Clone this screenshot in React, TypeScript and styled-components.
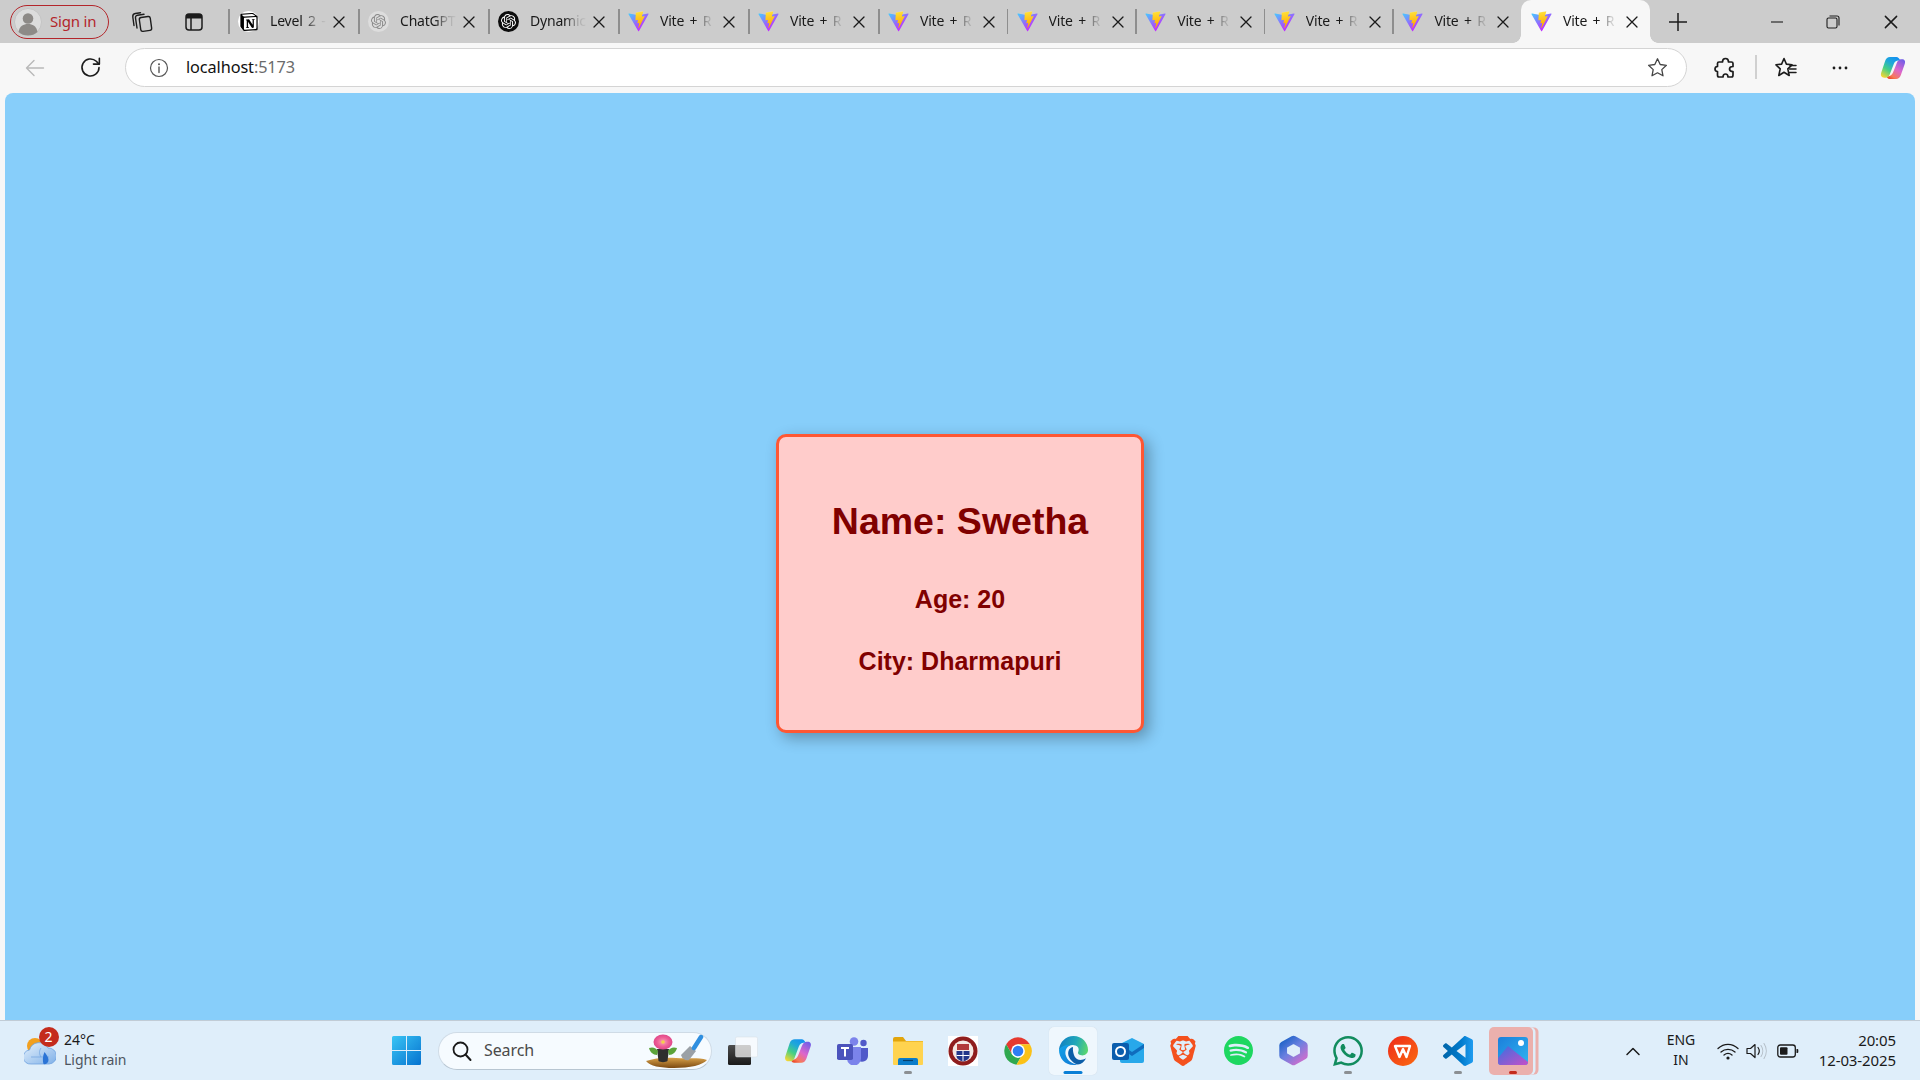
import React from "react";
import styled, { createGlobalStyle } from "styled-components";
import { SiNotion, SiOpenai, SiBrave, SiSpotify, SiWhatsapp } from "react-icons/si";

const UI = `"Noto Sans", "Open Sans", "Liberation Sans", sans-serif`;

const Global = createGlobalStyle`
  html, body { margin: 0; padding: 0; background: #f7f7f7; }
  * { box-sizing: border-box; }
  svg { display: block; }
`;

const Screen = styled.div`
  width: 1920px;
  height: 1080px;
  display: flex;
  flex-direction: column;
  overflow: hidden;
  font-family: ${UI};
  background: #f7f7f7;
`;

/* ---------- tab strip ---------- */
const TabStrip = styled.div`
  height: 43px;
  flex: none;
  display: flex;
  align-items: center;
  padding-left: 10px;
  background: #cccccc;
`;
const SignIn = styled.div`
  width: 99px;
  height: 34px;
  display: flex;
  align-items: center;
  gap: 8px;
  padding-left: 3px;
  border: 1.5px solid #b3262b;
  border-radius: 17px;
  color: #b3262b;
  font-size: 15px;
  letter-spacing: -0.2px;
`;
const SignInLabel = styled.span`
  margin-top: -2px;
`;
const Avatar = styled.span`
  width: 28px;
  height: 28px;
  flex: none;
`;
const Slot = styled.div<{ $w: number; $ml?: number }>`
  width: ${(p) => p.$w}px;
  height: 36px;
  flex: none;
  margin-left: ${(p) => p.$ml ?? 0}px;
  display: flex;
  align-items: center;
  justify-content: center;
`;
const Tabs = styled.div`
  display: flex;
  height: 43px;
  margin-left: 12px;
`;
const Tab = styled.div<{ $active?: boolean; $wide?: boolean }>`
  position: relative;
  width: ${(p) => (p.$wide ? 130 : 128.6)}px;
  height: 43px;
  flex: none;
  display: flex;
  align-items: center;
  padding-left: 10px;
  background: ${(p) => (p.$active ? "#f7f7f7" : "transparent")};
  border-radius: ${(p) => (p.$active ? "10px 10px 0 0" : "0")};
  &::before {
    content: "";
    display: ${(p) => (p.$active ? "none" : "block")};
    position: absolute;
    left: 0;
    top: 9px;
    width: 1.5px;
    height: 25px;
    background: #8e8e8e;
  }
  &::after {
    content: "";
    display: ${(p) => (p.$active ? "block" : "none")};
    position: absolute;
    bottom: 0;
    left: -8px;
    right: -8px;
    height: 8px;
    z-index: 0;
    background:
      radial-gradient(circle at 0 0, #cccccc 7.5px, #f7f7f7 8px) left bottom / 8px 8px no-repeat,
      radial-gradient(circle at 100% 0, #cccccc 7.5px, #f7f7f7 8px) right bottom / 8px 8px no-repeat;
  }
`;
const TabIcon = styled.span`
  width: 21px;
  height: 21px;
  flex: none;
  display: flex;
  align-items: center;
  justify-content: center;
`;
const RoundBadge = styled.span<{ $bg: string }>`
  width: 21px;
  height: 21px;
  border-radius: 50%;
  display: flex;
  align-items: center;
  justify-content: center;
  background: ${(p) => p.$bg};
`;
const TabLabel = styled.span`
  margin-left: 11px;
  flex: 0 0 58px;
  white-space: nowrap;
  font-size: 14px;
  letter-spacing: -0.2px;
  word-spacing: 2px;
  color: #1a1a1a;
  margin-top: -3px;
  -webkit-mask-image: linear-gradient(90deg, #000 60%, rgba(0, 0, 0, 0.22) 82%, transparent 100%);
  mask-image: linear-gradient(90deg, #000 60%, rgba(0, 0, 0, 0.22) 82%, transparent 100%);
`;
const TabClose = styled.span`
  margin-left: 3px;
  width: 16px;
  height: 16px;
  flex: none;
  color: #1a1a1a;
`;
const Spacer = styled.div`
  flex: 1;
`;

/* ---------- toolbar ---------- */
const Toolbar = styled.div`
  height: 50px;
  flex: none;
  display: flex;
  align-items: flex-start;
  padding-top: 5px;
  background: #f7f7f7;
`;
const AddressBar = styled.div`
  width: 1562px;
  height: 39px;
  flex: none;
  margin-left: 13px;
  display: flex;
  align-items: center;
  padding: 0 18px 0 23px;
  background: #fff;
  border: 1.5px solid #d4d4d4;
  border-radius: 20px;
`;
const Url = styled.span`
  margin-left: 17px;
  margin-top: -1px;
  font-size: 16.3px;
  letter-spacing: -0.1px;
  color: #111;
`;
const UrlPort = styled.span`
  color: #6b6b6b;
`;
const ToolSep = styled.div`
  width: 1.5px;
  height: 24px;
  flex: none;
  margin: 7px 0 0 8px;
  background: #d0d0d0;
`;
const ToolSlot = styled(Slot)`
  height: 39px;
`;

/* ---------- page ---------- */
const Page = styled.main`
  flex: 1;
  margin: 0 5px;
  display: flex;
  flex-direction: column;
  align-items: center;
  padding-top: 341px;
  background: #87cefa;
  border-radius: 8px 8px 0 0;
`;
const Card = styled.section`
  width: 368px;
  padding: 63px 0 54px;
  text-align: center;
  background: #ffcccb;
  border: 3px solid #ff5733;
  border-radius: 10px;
  box-shadow: 5px 5px 15px rgba(0, 0, 0, 0.3);
  font-family: "Liberation Sans", Arial, sans-serif;
  color: #800000;
`;
const Name = styled.h1`
  margin: 0;
  font-size: 37.5px;
  line-height: 43px;
  font-weight: 700;
`;
const Detail = styled.p<{ $mt: number }>`
  margin: ${(p) => p.$mt}px 0 0;
  font-size: 25px;
  line-height: 29px;
  font-weight: 700;
`;

/* ---------- taskbar ---------- */
const Taskbar = styled.footer`
  height: 60px;
  flex: none;
  display: flex;
  align-items: center;
  background: #dfeefa;
  border-top: 1px solid #c1ccd6;
`;
const Weather = styled.div`
  width: 392px;
  flex: none;
  display: flex;
  align-items: center;
  gap: 8px;
  padding-left: 24px;
`;
const WeatherIcon = styled.div`
  position: relative;
  width: 32px;
  height: 36px;
  flex: none;
`;
const Badge = styled.span`
  position: absolute;
  left: 14.5px;
  top: -5.5px;
  width: 20px;
  height: 20px;
  border-radius: 50%;
  background: #c42b1c;
  color: #fff;
  font-size: 14px;
  line-height: 20px;
  text-align: center;
`;
const TwoLines = styled.div`
  display: flex;
  flex-direction: column;
  margin-top: -2px;
  font-size: 14px;
  line-height: 20px;
`;
const LineDark = styled.span`
  color: #1a1a1a;
`;
const LineMuted = styled.span`
  color: #4d5560;
`;
const StartButton = styled.div`
  width: 29px;
  height: 29px;
  flex: none;
`;
const SearchBox = styled.div`
  width: 274px;
  height: 38px;
  flex: none;
  margin-left: 17px;
  display: flex;
  align-items: center;
  padding: 0 4px 0 12px;
  background: #f6fbff;
  border: 1px solid #cfdbe6;
  border-bottom-color: #b8c6d2;
  border-radius: 19px;
`;
const SearchText = styled.span`
  margin-left: 11px;
  margin-top: -1px;
  font-size: 16px;
  letter-spacing: -0.1px;
  color: #4a4a4a;
`;
const SearchArt = styled.span`
  margin-left: auto;
`;
const TaskIcons = styled.div`
  display: flex;
  margin-left: 3.5px;
`;
const TaskSlot = styled.div<{ $state?: "focus" | "alert" }>`
  position: relative;
  width: 55px;
  height: 48px;
  flex: none;
  display: flex;
  align-items: center;
  justify-content: center;
  &::before {
    content: "";
    display: ${(p) => (p.$state ? "block" : "none")};
    position: absolute;
    left: ${(p) => (p.$state === "alert" ? 3 : 3.5)}px;
    width: ${(p) => (p.$state === "alert" ? 44 : 48)}px;
    top: 0;
    bottom: 0;
    border-radius: 5px;
    background: ${(p) => (p.$state === "alert" ? "#ebb0ad" : "rgba(255,255,255,0.5)")};
    box-shadow: ${(p) => (p.$state === "alert" ? "3px 0 0 -0.5px #dfeefa, 6px 0 0 -0.5px #ebb0ad" : "0 0 1px rgba(0,0,0,0.15)")};
  }
  & > svg {
    position: relative;
  }
`;
const RunDot = styled.span<{ $kind: "run" | "focus" | "alert" }>`
  position: absolute;
  bottom: 1px;
  left: 50%;
  height: 3px;
  border-radius: 2px;
  transform: translateX(-50%);
  width: ${(p) => (p.$kind === "focus" ? 19 : 8)}px;
  background: ${(p) => (p.$kind === "run" ? "#8b8f93" : p.$kind === "focus" ? "#0a7fd6" : "#c42b1c")};
`;
const TrayLang = styled.div`
  width: 40px;
  flex: none;
  margin-left: 12px;
  margin-top: -1px;
  text-align: center;
  font-size: 14px;
  line-height: 20px;
  color: #1a1a1a;
`;
const Clock = styled.div`
  margin-left: auto;
  margin-right: 24px;
  margin-top: -2px;
  text-align: right;
  font-size: 15px;
  line-height: 20px;
  letter-spacing: -0.1px;
  color: #1a1a1a;
`;

/* ---------- drawings ---------- */
const Stroke = { fill: "none", stroke: "currentColor", strokeLinecap: "round", strokeLinejoin: "round" } as const;

const CloseX = ({ size = 16, c = "#1a1a1a" }: { size?: number; c?: string }) => (
  <svg width={size} height={size} viewBox="0 0 16 16">
    <path d="M3 3l10 10M13 3L3 13" stroke={c} strokeWidth="1.3" strokeLinecap="round" />
  </svg>
);

const ViteLogo = ({ id }: { id: string }) => (
  <svg width="21" height="21" viewBox="0 0 410 404">
    <defs>
      <linearGradient id={`va${id}`} x1="6" y1="33" x2="235" y2="344" gradientUnits="userSpaceOnUse">
        <stop stopColor="#41D1FF" />
        <stop offset="1" stopColor="#BD34FE" />
      </linearGradient>
      <linearGradient id={`vb${id}`} x1="194.65" y1="8.82" x2="236.08" y2="292.99" gradientUnits="userSpaceOnUse">
        <stop stopColor="#FFEA83" />
        <stop offset="0.083" stopColor="#FFDD35" />
        <stop offset="1" stopColor="#FFA800" />
      </linearGradient>
    </defs>
    <path d="M399.641 59.5246L215.643 388.545C211.844 395.338 202.084 395.378 198.228 388.618L10.5817 59.5563C6.38087 52.1896 12.6802 43.2665 21.0281 44.7586L205.223 77.6824C206.398 77.8924 207.601 77.8904 208.776 77.6763L389.119 44.8058C397.439 43.2894 403.768 52.1434 399.641 59.5246Z" fill={`url(#va${id})`} />
    <path d="M292.965 1.5744L156.801 28.2552C154.563 28.6937 152.906 30.5903 152.771 32.8664L144.395 174.33C144.198 177.662 147.258 180.248 150.51 179.498L188.42 170.749C191.967 169.931 195.172 173.055 194.443 176.622L183.18 231.775C182.422 235.487 185.907 238.661 189.532 237.56L212.947 230.446C216.577 229.344 220.065 232.527 219.297 236.242L201.398 322.875C200.278 328.294 207.486 331.249 210.492 326.603L212.5 323.5L323.454 102.072C325.312 98.3645 322.108 94.137 318.036 94.9228L279.014 102.454C275.347 103.161 272.227 99.746 273.262 96.1583L298.731 7.86689C299.767 4.27314 296.636 0.855181 292.965 1.5744Z" fill={`url(#vb${id})`} />
  </svg>
);

const AvatarIcon = () => (
  <svg width="28" height="28" viewBox="0 0 28 28">
    <circle cx="14" cy="14" r="13.5" fill="#dcdcdc" stroke="#c4c4c4" />
    <circle cx="14" cy="10.5" r="5.3" fill="#8d8a87" />
    <path d="M4.5 24c1-6 5-8 9.5-8s8.5 2 9.5 8c-2.5 2.5-6 3.5-9.5 3.5S7 26.5 4.5 24z" fill="#8d8a87" />
  </svg>
);

const CollectionsIcon = () => (
  <svg width="22" height="22" viewBox="0 0 22 22" color="#1c1c1c">
    <rect x="9" y="6" width="11" height="14" rx="2" transform="rotate(-8 14 13)" {...Stroke} strokeWidth="1.4" />
    <path d="M6 17L4.5 7C4.3 5.5 5 4.5 6.5 4.3L13 3.3" {...Stroke} strokeWidth="1.4" />
    <path d="M3 14.5L1.8 6C1.6 4 2.5 2.8 4.3 2.5L9.5 1.7" {...Stroke} strokeWidth="1.4" />
  </svg>
);

const VerticalTabsIcon = () => (
  <svg width="20" height="20" viewBox="0 0 20 20">
    <rect x="2" y="2" width="16" height="16" rx="3" fill="none" stroke="#1c1c1c" strokeWidth="1.5" />
    <path d="M2 5a3 3 0 0 1 3-3h10a3 3 0 0 1 3 3v1.5H2z" fill="#1c1c1c" />
    <path d="M7 6v12" stroke="#1c1c1c" strokeWidth="1.5" />
  </svg>
);

const Plus = () => (
  <svg width="20" height="20" viewBox="0 0 20 20">
    <path d="M10 1v18M1 10h18" stroke="#1c1c1c" strokeWidth="1.5" />
  </svg>
);

const MinIcon = () => (
  <svg width="14" height="14" viewBox="0 0 14 14">
    <path d="M1 7h12" stroke="#1c1c1c" strokeWidth="1.1" />
  </svg>
);
const RestoreIcon = () => (
  <svg width="14" height="14" viewBox="0 0 14 14">
    <rect x="1" y="3" width="10" height="10" rx="1.5" fill="none" stroke="#1c1c1c" strokeWidth="1.1" />
    <path d="M3.5 1h7.5a2 2 0 0 1 2 2v7.5" fill="none" stroke="#1c1c1c" strokeWidth="1.1" />
  </svg>
);

const BackArrow = () => (
  <svg width="20" height="20" viewBox="0 0 20 20" color="#b9b9b9">
    <path d="M18.5 10H1.5M9 2.5L1.5 10 9 17.5" {...Stroke} strokeWidth="1.4" />
  </svg>
);
const Reload = () => (
  <svg width="25" height="25" viewBox="0 0 22 22" color="#1c1c1c">
    <path d="M18.5 11a7.5 7.5 0 1 1-2.4-5.5L18.5 8" {...Stroke} strokeWidth="1.4" />
    <path d="M18.8 2.8V8h-5.2" {...Stroke} strokeWidth="1.4" />
  </svg>
);
const InfoIcon = () => (
  <svg width="20" height="20" viewBox="0 0 20 20" color="#555">
    <circle cx="10" cy="10" r="8.5" {...Stroke} strokeWidth="1.2" />
    <path d="M10 9v5.5" {...Stroke} strokeWidth="1.4" />
    <circle cx="10" cy="6.2" r="1" fill="#555" />
  </svg>
);
const StarIcon = () => (
  <svg width="21" height="21" viewBox="0 0 21 21" color="#444">
    <path d="M10.5 1.8l2.7 5.7 6.2.8-4.6 4.3 1.2 6.2-5.5-3-5.5 3 1.2-6.2-4.6-4.3 6.2-.8z" {...Stroke} strokeWidth="1.3" />
  </svg>
);
const PuzzleIcon = () => (
  <svg width="22" height="22" viewBox="0 0 22 22" color="#1c1c1c">
    <path d="M8.5 5C8.5 2.5 10 1.5 11.5 1.5C13 1.5 14.5 2.5 14.5 5H17.5C18.5 5 19 5.5 19 6.5V9.5C17 9.5 15.5 10.5 15.5 12C15.5 13.5 17 14.5 19 14.5V18C19 19 18.5 20 17.5 20H14C14 18 13 17 11.5 17C10 17 9 18 9 20H5C4 20 3.5 19 3.5 18V14.5C1.5 14.5 1 13.5 1 12C1 10.5 1.5 9.5 3.5 9.5V6.5C3.5 5.5 4 5 5 5Z" {...Stroke} strokeWidth="1.7" />
  </svg>
);
const FavoritesIcon = () => (
  <svg width="22" height="22" viewBox="0 0 22 22" color="#1c1c1c">
    <path d="M9 1.5l2.4 5.6 5.6.7-4.2 4 1.4 6.7L9 15.3 3.8 18.5l1.4-6.7-4.2-4 5.6-.7z" {...Stroke} strokeWidth="1.6" />
    <path d="M15 8.5H21M14.5 12H21M14.5 15.5H21" {...Stroke} strokeWidth="1.5" />
  </svg>
);
const DotsIcon = () => (
  <svg width="18" height="18" viewBox="0 0 18 18">
    <circle cx="3" cy="9" r="1.4" fill="#1c1c1c" />
    <circle cx="9" cy="9" r="1.4" fill="#1c1c1c" />
    <circle cx="15" cy="9" r="1.4" fill="#1c1c1c" />
  </svg>
);

const Copilot = ({ id, size }: { id: string; size: number }) => (
  <svg width={size} height={size} viewBox="0 0 32 32">
    <defs>
      <linearGradient id={`ca${id}`} x1="0.75" y1="0" x2="0.15" y2="1">
        <stop offset="0" stopColor="#1592f0" />
        <stop offset="0.3" stopColor="#1fa8d8" />
        <stop offset="0.62" stopColor="#45cf85" />
        <stop offset="1" stopColor="#f6d632" />
      </linearGradient>
      <linearGradient id={`cb${id}`} x1="0.85" y1="0" x2="0.2" y2="1">
        <stop offset="0" stopColor="#6f5ee8" />
        <stop offset="0.5" stopColor="#dd66cc" />
        <stop offset="0.85" stopColor="#f77a58" />
        <stop offset="1" stopColor="#ee4b2b" />
      </linearGradient>
    </defs>
    <path d="M19.5 28.5H12C10 28.5 9 27 8.5 25.5C12 25.5 15 24 16 21L20 11C21 8 23 6 25 6H26.5C29 6 30.5 8 29.5 11L25 24C24 27 22 28.5 19.5 28.5Z" fill={`url(#cb${id})`} />
    <path d="M12.5 3.5H20C22 3.5 23 5 24 7C21 7 18 8 17 11L13 21.5C12 25 10.5 27 8 27H6C3 27 1.5 24.5 2.5 21.5L7 8C8 5 10 3.5 12.5 3.5Z" fill={`url(#ca${id})`} />
  </svg>
);

const WeatherArt = () => (
  <svg width="32" height="36" viewBox="0 0 32 36">
    <defs>
      <linearGradient id="cloud" x1="0" y1="0" x2="1" y2="1">
        <stop offset="0" stopColor="#e6f2fc" />
        <stop offset="1" stopColor="#7fb0e8" />
      </linearGradient>
    </defs>
    <circle cx="11" cy="13" r="8" fill="#f2a01f" />
    <path d="M7 31a7 7 0 0 1-1.5-14 10 10 0 0 1 18.5-2 8 8 0 0 1 1 16z" fill="url(#cloud)" stroke="#6fa2e0" strokeWidth="0.8" />
    <path d="M7 24h18M17 15c-2 3-2 6 0 9" fill="none" stroke="#6fa2e0" strokeWidth="0.7" />
    <path d="M20.5 19c2 3 4 5 4 8a4 4 0 0 1-5 4c-1-3-1-8 1-12z" fill="#2b74d6" />
  </svg>
);

const WindowsLogo = () => (
  <svg width="29" height="29" viewBox="0 0 29 29">
    <defs>
      <linearGradient id="win" x1="0" y1="0" x2="1" y2="1">
        <stop offset="0" stopColor="#39c5f5" />
        <stop offset="1" stopColor="#0672cf" />
      </linearGradient>
    </defs>
    <path d="M0 1.5A1.5 1.5 0 0 1 1.5 0H14v14H0zM15 0h12.5A1.5 1.5 0 0 1 29 1.5V14H15zM0 15h14v14H1.5A1.5 1.5 0 0 1 0 27.5zM15 15h14v12.5a1.5 1.5 0 0 1-1.5 1.5H15z" fill="url(#win)" />
  </svg>
);

const SearchIcon = () => (
  <svg width="22" height="22" viewBox="0 0 22 22" color="#1a1a1a">
    <circle cx="9.5" cy="9.5" r="7" {...Stroke} strokeWidth="1.8" />
    <path d="M14.5 14.5L19.5 20" {...Stroke} strokeWidth="2" />
  </svg>
);

const FlowerPot = () => (
  <svg width="61" height="34" viewBox="0 0 61 34">
    <defs>
      <linearGradient id="soil" x1="0" y1="0" x2="0" y2="1">
        <stop offset="0" stopColor="#d9a24a" />
        <stop offset="1" stopColor="#7c4a12" />
      </linearGradient>
      <radialGradient id="petal">
        <stop offset="0" stopColor="#f9a4b8" />
        <stop offset="0.6" stopColor="#ee5f96" />
        <stop offset="1" stopColor="#e0478a" />
      </radialGradient>
    </defs>
    <path d="M0 27C8 24 20 23 30 24C42 25 52 23 61 26C57 31 44 34 28 34C14 34 4 32 0 27Z" fill="url(#soil)" />
    <path d="M11 15h12l-1.5 12c-2 1.5-7 1.5-9 0z" fill="#2e2e2e" />
    <path d="M3 14c4-1.5 7 0 9 3l-1 4c-4 0-7-3-8-7zM31 14c-4-1.5-7 0-9 3l1 4c4 0 7-3 8-7z" fill="#5ba33a" />
    <ellipse cx="17" cy="8" rx="9.5" ry="7.5" fill="url(#petal)" />
    <circle cx="17" cy="8" r="1.8" fill="#f4cf48" />
    <path d="M35 21L44 12L50 17L43 26C40 27 36 25 35 21Z" fill="#9aa0a6" />
    <path d="M48 14L55 3" stroke="#2f8fe0" strokeWidth="4.5" strokeLinecap="round" />
  </svg>
);

const TaskViewIcon = () => (
  <svg width="32" height="30" viewBox="0 0 32 30">
    <defs>
      <linearGradient id="tv" x1="0" y1="0" x2="0" y2="1">
        <stop offset="0" stopColor="#4d4d4d" />
        <stop offset="1" stopColor="#1a1a1a" />
      </linearGradient>
    </defs>
    <rect x="1" y="9" width="23" height="20" rx="1.5" fill="url(#tv)" />
    <rect x="8.5" y="1" width="22" height="20" rx="1.5" fill="#fff" fillOpacity="0.72" stroke="#d6dde3" strokeWidth="0.5" />
  </svg>
);

const TeamsIcon = () => (
  <svg width="32" height="28" viewBox="0 0 32 28">
    <circle cx="17" cy="4.5" r="4.3" fill="#7b83eb" />
    <circle cx="26.5" cy="6" r="3.2" fill="#5059c9" />
    <path d="M22 11h9v8a6 6 0 0 1-9 5z" fill="#5059c9" />
    <path d="M9 10h15v11a7 7 0 0 1-14 1z" fill="#7b83eb" />
    <rect x="0" y="7" width="16" height="16" rx="1.8" fill="#4b53bc" />
    <path d="M4 11h8M8 11v8.5" stroke="#fff" strokeWidth="2" />
  </svg>
);

const ExplorerIcon = () => (
  <svg width="30" height="28" viewBox="0 0 30 28">
    <path d="M0 2a2 2 0 0 1 2-2h8l3 4h17v6H0z" fill="#e2a50c" />
    <path d="M0 4.5h30V27a1 1 0 0 1-1 1H1a1 1 0 0 1-1-1z" fill="#ffd34f" />
    <path d="M5 23a2 2 0 0 1 2-2h16a2 2 0 0 1 2 2v5H5z" fill="#0a7cc9" />
    <path d="M10 23.5h10" stroke="#063f6a" strokeWidth="1.2" />
  </svg>
);

const EmblemIcon = () => (
  <svg width="30" height="30" viewBox="0 0 30 30">
    <rect width="30" height="30" fill="#fff" />
    <circle cx="15" cy="15" r="14.5" fill="#8f1d1d" />
    <circle cx="15" cy="15" r="10.5" fill="#f4e9e4" />
    <path d="M9 8h12v6H9z" fill="#b23a3a" />
    <path d="M8.5 15h13v5c0 3-3 4.5-6.5 5.5-3.5-1-6.5-2.5-6.5-5.5z" fill="#24378a" />
    <path d="M15 15v10M8.5 19.5h13" stroke="#fff" strokeWidth="1" />
  </svg>
);

const ChromeIcon = () => (
  <svg width="30" height="30" viewBox="0 0 48 48">
    <path d="M5 13A22 22 0 0 1 43 13L24 13 14.5 29.5z" fill="#e5392f" />
    <path d="M5 13A22 22 0 0 0 21.5 45.9L31 29.5H14.5z" fill="#2fa84f" />
    <path d="M43 13H24l7 16.5-9.5 16.4A22 22 0 0 0 43 13z" fill="#fbc116" />
    <circle cx="24" cy="24" r="11" fill="#fff" />
    <circle cx="24" cy="24" r="8.5" fill="#2f7df2" />
  </svg>
);

const EdgeIcon = () => (
  <svg width="31" height="31" viewBox="0 0 32 32">
    <defs>
      <linearGradient id="edgeTop" x1="0" y1="0.4" x2="1" y2="0.6">
        <stop offset="0" stopColor="#0f7fc4" />
        <stop offset="0.55" stopColor="#22a8b8" />
        <stop offset="1" stopColor="#5ad66f" />
      </linearGradient>
      <linearGradient id="edgeLeft" x1="0" y1="0" x2="0.6" y2="1">
        <stop offset="0" stopColor="#12a3e8" />
        <stop offset="1" stopColor="#1280d8" />
      </linearGradient>
    </defs>
    <path d="M1 15C2 7 8 1 16 1C25 1 31 8 31 15.5C31 19 28 21.5 24 21C21 20.5 20 19 21 17C22 14 21 11 16.5 10.5C11 10 7 12.5 1 15Z" fill="url(#edgeTop)" />
    <path d="M1 15C4 11 9 9.5 13 10.5C8 12.5 7 17 8 21C9.5 26 14 30 20 30.5C18.5 31 17 31 16 31C7 31 1 24 1 15Z" fill="url(#edgeLeft)" />
    <path d="M15.5 12.5C10.5 13.5 9.5 19 11.5 23C13.5 27 17.5 30 20.5 30.5C24 30 27 28 29 24C24 27 19 26 17 22C16 19.5 15 16 15.5 12.5Z" fill="#0c5ea8" />
  </svg>
);

const OutlookIcon = () => (
  <svg width="32" height="28" viewBox="0 0 32 28">
    <path d="M8 7l12-6 12 6v17a2 2 0 0 1-2 2H10a2 2 0 0 1-2-2z" fill="#28a8ea" />
    <path d="M8 7l12 8 12-8v4l-12 8-12-8z" fill="#0f6cbd" />
    <rect x="0" y="6" width="17" height="17" rx="2" fill="#0a5dad" />
    <circle cx="8.5" cy="14.5" r="4.5" fill="none" stroke="#fff" strokeWidth="2" />
  </svg>
);

const M365Icon = () => (
  <svg width="29" height="31" viewBox="0 0 28 30">
    <defs>
      <linearGradient id="m365" x1="0" y1="0" x2="0.8" y2="1">
        <stop offset="0" stopColor="#1f63c8" />
        <stop offset="0.5" stopColor="#6a80e0" />
        <stop offset="1" stopColor="#c070d0" />
      </linearGradient>
    </defs>
    <path d="M14 4.5l10 5.5v10l-10 5.5L4 20v-10z" fill="none" stroke="url(#m365)" strokeWidth="7.5" strokeLinejoin="round" />
  </svg>
);

const WpsIcon = () => (
  <svg width="30" height="30" viewBox="0 0 30 30">
    <defs>
      <linearGradient id="wps" x1="0" y1="0" x2="1" y2="1">
        <stop offset="0" stopColor="#ee2a1b" />
        <stop offset="1" stopColor="#fb6a10" />
      </linearGradient>
    </defs>
    <circle cx="15" cy="15" r="15" fill="url(#wps)" />
    <path d="M7 10h15l-3.5 11-3.5-8-3.5 8z" fill="none" stroke="#fff" strokeWidth="2.4" strokeLinejoin="round" />
  </svg>
);

const VsCodeIcon = () => (
  <svg width="30" height="30" viewBox="0 0 100 100">
    <defs>
      <linearGradient id="vsc" x1="0" y1="0" x2="1" y2="0">
        <stop offset="0" stopColor="#0065a9" />
        <stop offset="0.6" stopColor="#007acc" />
        <stop offset="1" stopColor="#1f9cf0" />
      </linearGradient>
    </defs>
    <path fillRule="evenodd" d="M70.9119 99.3171C72.4869 99.9307 74.2828 99.8914 75.8725 99.1264L96.4608 89.2197C98.6242 88.1787 100 85.9892 100 83.5872V16.4133C100 14.0113 98.6243 11.8218 96.4609 10.7808L75.8725 0.873756C73.7862 -0.130129 71.3446 0.11576 69.5135 1.44695C69.252 1.63711 69.0028 1.84943 68.769 2.08341L29.3551 38.0415L12.1872 25.0096C10.589 23.7965 8.35363 23.8959 6.86933 25.2461L1.36303 30.2549C-0.452552 31.9064 -0.454633 34.7627 1.35853 36.417L16.2471 50.0001L1.35853 63.5832C-0.454633 65.2374 -0.452552 68.0938 1.36303 69.7453L6.86933 74.7541C8.35363 76.1043 10.589 76.2037 12.1872 74.9905L29.3551 61.9587L68.769 97.9167C69.3925 98.5406 70.1246 99.0104 70.9119 99.3171ZM75.0152 27.2989L45.1091 50.0001L75.0152 72.7012V27.2989Z" fill="url(#vsc)" />
  </svg>
);

const PhotosIcon = () => (
  <svg width="30" height="30" viewBox="0 0 30 30">
    <defs>
      <linearGradient id="ph" x1="0" y1="0" x2="1" y2="1">
        <stop offset="0" stopColor="#1c7fdb" />
        <stop offset="1" stopColor="#2fb4f0" />
      </linearGradient>
      <linearGradient id="ph2" x1="0" y1="0" x2="1" y2="1">
        <stop offset="0" stopColor="#3a6fe0" />
        <stop offset="1" stopColor="#c64fc8" />
      </linearGradient>
    </defs>
    <rect width="30" height="28" y="1" rx="3" fill="url(#ph)" />
    <circle cx="23" cy="7" r="3" fill="#fff" />
    <path d="M0 22l10-12 20 16a3 3 0 0 1-3 3H3a3 3 0 0 1-3-3z" fill="url(#ph2)" />
  </svg>
);

const ChevronUp = () => (
  <svg width="16" height="16" viewBox="0 0 16 16" color="#1a1a1a">
    <path d="M2 11.5L8 5.5l6 6" {...Stroke} strokeWidth="1.5" />
  </svg>
);
const WifiIcon = () => (
  <svg width="22" height="18" viewBox="0 0 22 18" color="#1a1a1a">
    <path d="M1 6.5c6-5.5 14-5.5 20 0M4 10c4-3.5 10-3.5 14 0M7 13c2.5-2 5.5-2 8 0" {...Stroke} strokeWidth="1.3" />
    <circle cx="11" cy="16" r="1.6" fill="#1a1a1a" />
  </svg>
);
const VolumeIcon = () => (
  <svg width="22" height="20" viewBox="0 0 22 20" color="#1a1a1a">
    <path d="M1 7.5v5h3.5L9 16.5v-13L4.5 7.5z" {...Stroke} strokeWidth="1.2" />
    <path d="M12 6.5c1.5 2 1.5 5 0 7" {...Stroke} strokeWidth="1.2" />
    <path d="M15 4.5c2.3 3.2 2.3 7.8 0 11M18 2.5c3 4.5 3 10.5 0 15" fill="none" stroke="#b5bfc8" strokeWidth="1.1" strokeLinecap="round" />
  </svg>
);
const BatteryIcon = () => (
  <svg width="22" height="14" viewBox="0 0 22 14">
    <rect x="0.8" y="1" width="17.5" height="12" rx="2.5" fill="none" stroke="#1a1a1a" strokeWidth="1.3" />
    <rect x="3" y="3.2" width="7.5" height="7.6" rx="1" fill="#1a1a1a" />
    <path d="M19.5 5h.8a1 1 0 0 1 1 1v2a1 1 0 0 1-1 1h-.8z" fill="#1a1a1a" />
  </svg>
);

const viteTabs = ["1", "2", "3", "4", "5", "6", "7"];

export default function App() {
  return (
    <Screen>
      <Global />
      <TabStrip>
        <SignIn>
          <Avatar><AvatarIcon /></Avatar>
          <SignInLabel>Sign in</SignInLabel>
        </SignIn>
        <Slot $w={44} $ml={11}><CollectionsIcon /></Slot>
        <Slot $w={44} $ml={8}><VerticalTabsIcon /></Slot>
        <Tabs>
          <Tab $wide>
            <TabIcon><RoundBadge $bg="#fff"><SiNotion size={18} color="#000" /></RoundBadge></TabIcon>
            <TabLabel>Level 2 -</TabLabel>
            <TabClose><CloseX /></TabClose>
          </Tab>
          <Tab $wide>
            <TabIcon><RoundBadge $bg="#dddddd"><SiOpenai size={15} color="#8a8a8a" /></RoundBadge></TabIcon>
            <TabLabel>ChatGPT</TabLabel>
            <TabClose><CloseX /></TabClose>
          </Tab>
          <Tab $wide>
            <TabIcon><RoundBadge $bg="#0d0d0d"><SiOpenai size={15} color="#fff" /></RoundBadge></TabIcon>
            <TabLabel>Dynamic</TabLabel>
            <TabClose><CloseX /></TabClose>
          </Tab>
          {viteTabs.map((id, i) => (
            <Tab key={id} $wide={i < 2}>
              <TabIcon><ViteLogo id={id} /></TabIcon>
              <TabLabel>Vite + R</TabLabel>
              <TabClose><CloseX /></TabClose>
            </Tab>
          ))}
          <Tab $active>
            <TabIcon><ViteLogo id="active" /></TabIcon>
            <TabLabel>Vite + R</TabLabel>
            <TabClose><CloseX /></TabClose>
          </Tab>
        </Tabs>
        <Slot $w={44} $ml={6}><Plus /></Slot>
        <Spacer />
        <Slot $w={54}><MinIcon /></Slot>
        <Slot $w={58}><RestoreIcon /></Slot>
        <Slot $w={58}><CloseX size={18} /></Slot>
      </TabStrip>

      <Toolbar>
        <ToolSlot $w={44} $ml={13}><BackArrow /></ToolSlot>
        <ToolSlot $w={44} $ml={11}><Reload /></ToolSlot>
        <AddressBar>
          <InfoIcon />
          <Url>localhost<UrlPort>:5173</UrlPort></Url>
          <Spacer />
          <StarIcon />
        </AddressBar>
        <ToolSlot $w={44} $ml={16}><PuzzleIcon /></ToolSlot>
        <ToolSep />
        <ToolSlot $w={44} $ml={7}><FavoritesIcon /></ToolSlot>
        <ToolSlot $w={44} $ml={10}><DotsIcon /></ToolSlot>
        <ToolSlot $w={44} $ml={9}><Copilot id="tb" size={28} /></ToolSlot>
      </Toolbar>

      <Page>
        <Card>
          <Name>Name: Swetha</Name>
          <Detail $mt={42}>Age: 20</Detail>
          <Detail $mt={33}>City: Dharmapuri</Detail>
        </Card>
      </Page>

      <Taskbar>
        <Weather>
          <WeatherIcon>
            <WeatherArt />
            <Badge>2</Badge>
          </WeatherIcon>
          <TwoLines>
            <LineDark>24°C</LineDark>
            <LineMuted>Light rain</LineMuted>
          </TwoLines>
        </Weather>
        <StartButton><WindowsLogo /></StartButton>
        <SearchBox>
          <SearchIcon />
          <SearchText>Search</SearchText>
          <SearchArt><FlowerPot /></SearchArt>
        </SearchBox>
        <TaskIcons>
          <TaskSlot><TaskViewIcon /></TaskSlot>
          <TaskSlot><Copilot id="task" size={30} /></TaskSlot>
          <TaskSlot><TeamsIcon /></TaskSlot>
          <TaskSlot><ExplorerIcon /><RunDot $kind="run" /></TaskSlot>
          <TaskSlot><EmblemIcon /></TaskSlot>
          <TaskSlot><ChromeIcon /></TaskSlot>
          <TaskSlot $state="focus"><EdgeIcon /><RunDot $kind="focus" /></TaskSlot>
          <TaskSlot><OutlookIcon /></TaskSlot>
          <TaskSlot><SiBrave size={30} color="#f4511e" /></TaskSlot>
          <TaskSlot><SiSpotify size={29} color="#1ed760" /></TaskSlot>
          <TaskSlot><M365Icon /></TaskSlot>
          <TaskSlot><SiWhatsapp size={30} color="#128c5e" /><RunDot $kind="run" /></TaskSlot>
          <TaskSlot><WpsIcon /></TaskSlot>
          <TaskSlot><VsCodeIcon /><RunDot $kind="run" /></TaskSlot>
          <TaskSlot $state="alert"><PhotosIcon /><RunDot $kind="alert" /></TaskSlot>
        </TaskIcons>
        <Slot $w={32} $ml={76.5}><ChevronUp /></Slot>
        <TrayLang>ENG<br />IN</TrayLang>
        <Slot $w={24} $ml={15}><WifiIcon /></Slot>
        <Slot $w={24} $ml={5}><VolumeIcon /></Slot>
        <Slot $w={24} $ml={7}><BatteryIcon /></Slot>
        <Clock>20:05<br />12-03-2025</Clock>
      </Taskbar>
    </Screen>
  );
}
